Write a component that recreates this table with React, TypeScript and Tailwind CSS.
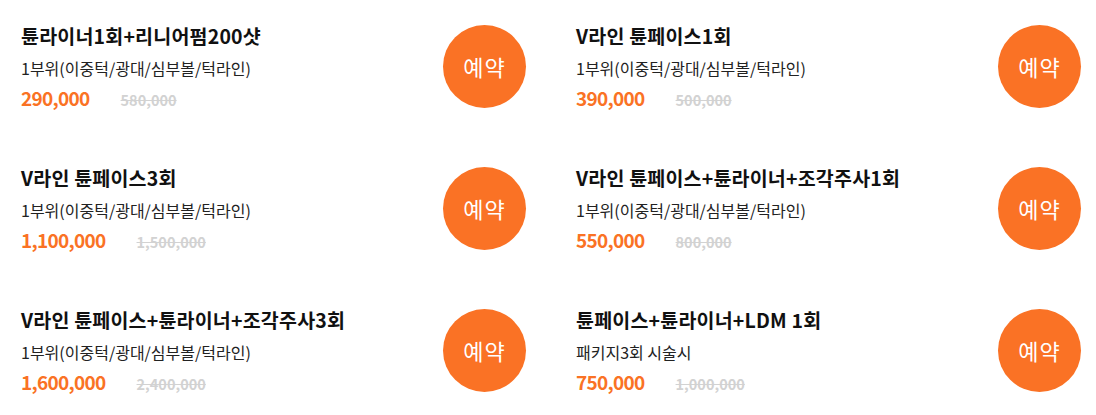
import React from "react";

const items = [
  { title: "튠라이너1회+리니어펌200샷", sub: "1부위(이중턱/광대/심부볼/턱라인)", price: "290,000", old: "580,000" },
  { title: "V라인 튠페이스1회", sub: "1부위(이중턱/광대/심부볼/턱라인)", price: "390,000", old: "500,000" },
  { title: "V라인 튠페이스3회", sub: "1부위(이중턱/광대/심부볼/턱라인)", price: "1,100,000", old: "1,500,000" },
  { title: "V라인 튠페이스+튠라이너+조각주사1회", sub: "1부위(이중턱/광대/심부볼/턱라인)", price: "550,000", old: "800,000" },
  { title: "V라인 튠페이스+튠라이너+조각주사3회", sub: "1부위(이중턱/광대/심부볼/턱라인)", price: "1,600,000", old: "2,400,000" },
  { title: "튠페이스+튠라이너+LDM 1회", sub: "패키지3회 시술시", price: "750,000", old: "1,000,000" },
];

export default function App() {
  return (
    <div
      className="w-[1096px] h-[415px] bg-white pl-[21px] pr-[15px] grid grid-cols-2 gap-x-[50px] content-start"
      style={{ fontFamily: '"Noto Sans CJK KR", "Noto Sans", sans-serif' }}
    >
      {items.map((it, i) => (
        <div key={i} className="h-[142px] flex justify-between items-start">
          <div className="pt-[24px]">
            <div className="text-[19.5px] leading-[24px] font-bold text-[#111] tracking-[0.2px]">{it.title}</div>
            <div className="mt-[10px] text-[16px] leading-[20px] text-[#222]">{it.sub}</div>
            <div className="mt-[8px] flex items-baseline">
              <span className="text-[19px] leading-[24px] font-bold text-[#fa7224] tracking-[-0.7px]">{it.price}</span>
              <span className="ml-[31px] text-[14.5px] font-bold text-[#d2d2d2] line-through">{it.old}</span>
            </div>
          </div>
          <div className="mt-[25px] w-[83px] h-[83px] rounded-full bg-[#fa7225] flex items-center justify-center text-white text-[22px] tracking-[1px] font-normal pb-[1px]">
            예약
          </div>
        </div>
      ))}
    </div>
  );
}
